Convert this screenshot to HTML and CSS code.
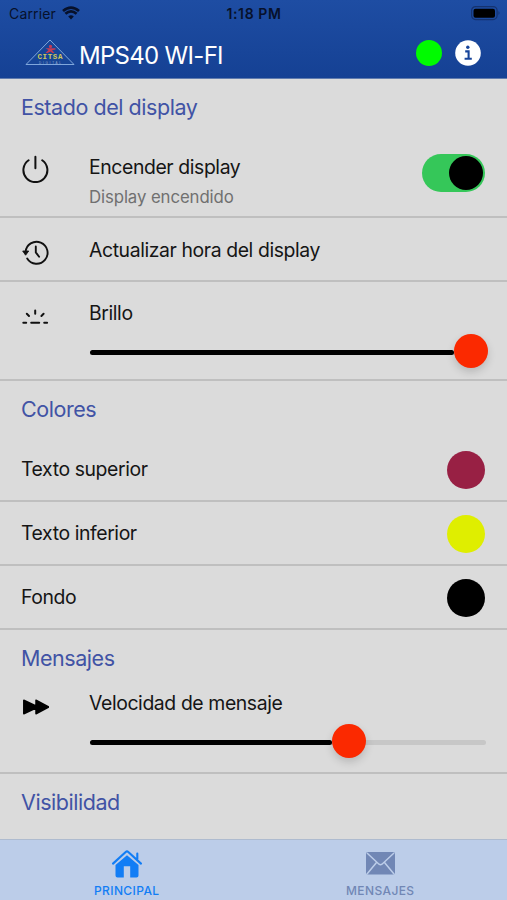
FILE: index.html
```html
<!DOCTYPE html>
<html lang="es">
<head>
<meta charset="utf-8">
<title>MPS40 WI-FI</title>
<link rel="stylesheet" href="styles.css">
</head>
<body>
<div class="app">
  <header class="header">
    <div class="status">
      <div class="carrier"><span>Carrier</span>
        <svg width="18" height="14" viewBox="0 0 18 14"><path d="M9 13.5 11.8 10.5Q9 8.2 6.2 10.5Z"/><path d="M3.4 7.8Q9 2.8 14.6 7.8M1 5Q9-1.8 17 5" fill="none" stroke="#07112b" stroke-width="2.7"/></svg>
      </div>
      <span class="time">1:18 PM</span>
      <svg class="battery" width="30" height="15" viewBox="0 0 30 15"><rect x=".6" y=".6" width="25.5" height="13" rx="4" fill="none" stroke="#15336f" stroke-width="1.2"/><rect x="2.5" y="2.7" width="21.5" height="9" rx="2" fill="#000"/><path d="M27.5 5q2 2 0 4z" fill="#15336f"/></svg>
    </div>
    <div class="toolbar">
      <svg class="logo" width="50" height="27" viewBox="0 0 50 27"><path d="M25 1 49 25.5H1Z" fill="#174597" stroke="#80a7dc" stroke-width="1"/><circle cx="25.5" cy="7.4" r="1.6" fill="#c43b55"/><path d="M20.5 9.2h10v1.3l-3.5.8 2.5 2.6h-2l-2-1.5-3 1.5h-2l3-2.8z" fill="#c43b55"/><text class="logo-name" x="12.5" y="20.4" textLength="25">CITSA</text><text class="logo-sub" x="14" y="24.9" textLength="22">DIGITAL</text></svg>
      <h1>MPS40 WI-FI</h1>
      <span class="led"></span>
      <svg class="info" width="26" height="26" viewBox="0 0 26 26"><circle cx="13" cy="13" r="12.8" fill="#fff"/><circle cx="12.8" cy="7.3" r="1.7" fill="#17449a"/><path d="M10.2 11.4h3.4v7M9.6 18.8h7.2" fill="none" stroke="#17449a" stroke-width="2.1"/></svg>
    </div>
  </header>

  <main>
    <h2>Estado del display</h2>
    <div class="row power">
      <svg class="icon" width="28" height="28" viewBox="0 0 28 28"><path d="M7.6 5.2A12 12 0 1 0 21.2 5.2M14.4 1.8v11.4" fill="none" stroke="#111" stroke-width="2" stroke-linecap="round"/></svg>
      <div class="label"><p>Encender display</p><small>Display encendido</small></div>
      <span class="toggle"></span>
    </div>
    <div class="row refresh">
      <svg class="icon" width="28" height="28" viewBox="0 0 28 28"><path d="M6.2 20.5A11 11 0 1 0 4.6 14M14.8 8.4v6l3.3 4.4" fill="none" stroke="#111" stroke-width="1.9" stroke-linecap="round"/><path d="M1.7 13h6l-3.1 4.2z" fill="#111" stroke="#111" stroke-width=".9" stroke-linejoin="round"/></svg>
      <p>Actualizar hora del display</p>
    </div>
    <div class="row range">
      <svg class="icon" width="28" height="28" viewBox="0 0 28 28"><path d="M2.3 19.7h2.9M10.2 19.7h8M23.2 19.7h2.9M14.2 7.5v3.3M5.8 10.8 8 13M22.6 10.8 20.4 13" fill="none" stroke="#111" stroke-width="2" stroke-linecap="round"/></svg>
      <div class="control"><p>Brillo</p><div class="slider full"><span class="knob"></span></div></div>
    </div>

    <h2 class="tall">Colores</h2>
    <div class="row color"><p>Texto superior</p><span class="swatch wine"></span></div>
    <div class="row color"><p>Texto inferior</p><span class="swatch yellow"></span></div>
    <div class="row color"><p>Fondo</p><span class="swatch black"></span></div>

    <h2 class="compact">Mensajes</h2>
    <div class="row range speed">
      <svg class="icon" width="28" height="28" viewBox="0 0 28 28"><path d="M2.8 7.2v13.6L15 15v5.8L28 14 15 7.2V13z" fill="#000" stroke="#000" stroke-width="1.5" stroke-linejoin="round"/></svg>
      <div class="control"><p>Velocidad de mensaje</p><div class="slider partial"><span class="knob"></span></div></div>
    </div>
    <h2>Visibilidad</h2>
  </main>

  <nav class="tabs">
    <div class="tab active">
      <svg width="32" height="30" viewBox="0 0 32 30"><path d="M16 6.2 4.5 16v10.5a2 2 0 0 0 2 2H12.8V17.3h6.4v11.2h6.3a2 2 0 0 0 2-2V16Z"/><path d="M2 14.6 14.7 3q1.3-1.1 2.6 0L30 14.6M26.3 10V4.5" fill="none" stroke="#127df5" stroke-width="2.1" stroke-linecap="round"/></svg>
      <span>PRINCIPAL</span>
    </div>
    <div class="tab">
      <svg width="32" height="30" viewBox="0 0 32 30"><rect x="2" y="3" width="29" height="22.5" rx="2"/><path d="m3 4 12 11.2q1.5 1 3 0L30 4M3 25l9.5-11.5M30 25l-9.5-11.5" fill="none" stroke="#bccde9" stroke-width="1.5"/></svg>
      <span>MENSAJES</span>
    </div>
  </nav>
</div>
</body>
</html>
```
FILE: styles.css
```css
* { box-sizing: border-box; }
body { margin: 0; font-family: Inter, "Liberation Sans", sans-serif; color: #151515; background: #dbdbdb; }
h1, h2, p { margin: 0; font-weight: 400; white-space: nowrap; }
svg, .led, .swatch, .toggle { display: block; flex: none; }
.app { width: 507px; height: 900px; display: flex; flex-direction: column; overflow: hidden; }
.header { height: 79px; flex: none; background: linear-gradient(#1e4da3, #154194); border-bottom: 1px solid #617cae; }
.status { height: 28px; padding: 0 7px 0 9px; display: grid; grid-template-columns: 1fr auto 1fr; align-items: center; font-size: 14px; line-height: 28px; color: #07112b; }
.carrier { display: flex; align-items: center; gap: 6px; letter-spacing: .15px; }
.carrier svg { fill: #07112b; margin-top: -2px; }
.time { font-weight: 600; font-size: 14px; letter-spacing: .6px; margin-left: -1px; }
.battery { justify-self: end; margin-right: -1px; margin-top: -2px; }
.toolbar { height: 50px; display: flex; align-items: center; padding: 0 26px 0 25px; }
.logo { margin-top: -1px; }
.logo-name { font: 700 7.5px/1 "Liberation Mono", monospace; fill: #d2c958; }
.logo-sub { font: 3px/1 "Liberation Sans", sans-serif; fill: #91a8cf; }
h1 { margin-left: 4px; margin-top: 5px; font-size: 24px; line-height: 30px; letter-spacing: -.7px; color: #fff; }
.led { width: 26px; height: 26px; margin-left: auto; border-radius: 50%; background: #00fb00; }
.info { margin-left: 13px; margin-top: -1px; }
main { flex: 1; min-height: 0; overflow: hidden; }
h2 { height: 56px; padding: 15px 21px 0; font-size: 21.5px; line-height: 26px; letter-spacing: -.45px; color: #4153a5; }
h2.tall { height: 57px; }
h2.compact { height: 42px; }
.row { display: flex; align-items: center; padding: 0 21px; border-bottom: 2px solid #bfbfbf; }
.row p { font-size: 19.4px; line-height: 26px; letter-spacing: -.4px; }
.icon { margin-right: 40px; }
.power { height: 83px; align-items: flex-start; padding-top: 19px; }
.power .icon { margin-top: 1px; }
.label { display: flex; flex-direction: column; gap: 5px; }
small { font-size: 16.8px; line-height: 24px; letter-spacing: -.1px; color: #707070; }
.toggle { width: 63px; height: 38px; margin: 0 1px 0 auto; padding: 2px; border-radius: 19px; background: #35c759; display: flex; justify-content: flex-end; }
.toggle::after { content: ""; width: 34px; height: 34px; border-radius: 50%; background: #000; }
.refresh { height: 64px; padding-top: 2px; }
.refresh .icon { margin-top: 4px; }
.range { height: 99px; align-items: flex-start; padding-top: 18px; }
.range .icon { margin-top: 3px; }
.control { flex: 1; display: flex; flex-direction: column; }
.slider { height: 5px; margin-top: 24px; margin-left: 1px; border-radius: 3px; background: #c7c7c7; display: flex; align-items: center; }
.slider::before { content: ""; height: 5px; border-radius: 3px; background: #000; }
.full::before { width: 364px; }
.partial::before { width: 242px; }
.knob { width: 34px; height: 34px; flex: none; margin-top: -3px; border-radius: 50%; background: #fb2900; box-shadow: 0 4px 8px rgb(0 0 0 / 16%); }
.color { height: 64px; padding-right: 22px; padding-top: 1px; justify-content: space-between; }
.color p { margin-top: -1px; }
.swatch { width: 38px; height: 38px; border-radius: 50%; }
.wine { background: #982044; }
.yellow { background: #dfee00; }
.black { background: #000; }
.speed { height: 102px; }
.tabs { height: 61px; flex: none; border-top: 1px solid #aebbcf; background: #bccde9; display: grid; grid-template-columns: 1fr 1fr; }
.tab { display: flex; flex-direction: column; align-items: center; padding-top: 9px; font-size: 12px; line-height: 16px; font-weight: 500; letter-spacing: .4px; color: #7187b5; fill: #7187b5; }
.tab span { margin-top: 4px; }
.active { color: #127df5; fill: #127df5; }
```
